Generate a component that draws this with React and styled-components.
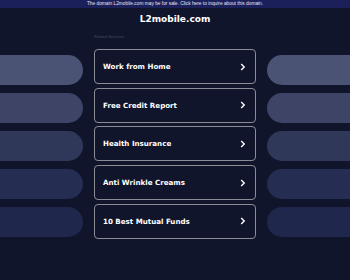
import React from "react";
import styled, { createGlobalStyle } from "styled-components";

const searches = [
  "Work from Home",
  "Free Credit Report",
  "Health Insurance",
  "Anti Wrinkle Creams",
  "10 Best Mutual Funds",
];

const pillColors = ["#4b5374", "#3d4466", "#30385a", "#252d53", "#1f274c"];

const App = () => {
  return (
    <Page>
      <GlobalStyle />
      <TopBar>
        The domain L2mobile.com may be for sale. Click here to inquire about
        this domain.
      </TopBar>
      <Title>L2mobile.com</Title>
      <Layout>
        <PillColumn>
          {pillColors.map((c, idx) => (
            <Pill key={idx} $color={c} $side="left" />
          ))}
        </PillColumn>
        <Center>
          <Label>Related Searches</Label>
          <List>
            {searches.map((s, idx) => (
              <Card key={idx}>
                <span>{s}</span>
                <Chevron viewBox="0 0 6 8">
                  <path d="M1.2 1 L4.2 4 L1.2 7" />
                </Chevron>
              </Card>
            ))}
          </List>
        </Center>
        <PillColumn>
          {pillColors.map((c, idx) => (
            <Pill key={idx} $color={c} $side="right" />
          ))}
        </PillColumn>
      </Layout>
    </Page>
  );
};

const GlobalStyle = createGlobalStyle`
  body {
    margin: 0;
    background: #10152c;
    font-family: "DejaVu Sans", "Liberation Sans", sans-serif;
  }
`;

const Page = styled.div`
  width: 350px;
  height: 280px;
  overflow: hidden;
  background: #10152c;
  display: flex;
  flex-direction: column;
  align-items: stretch;
`;

const TopBar = styled.div`
  height: 8px;
  background: #1b1f5a;
  color: #e6e8f5;
  font-family: "Liberation Sans", Arial, sans-serif;
  font-size: 4.8px;
  line-height: 8px;
  text-align: center;
  white-space: nowrap;
`;

const Title = styled.h1`
  margin: 5px 0 0;
  height: 12px;
  line-height: 12px;
  text-align: center;
  color: #ffffff;
  font-family: "DejaVu Sans", sans-serif;
  font-size: 9px;
  font-weight: 700;
`;

const Layout = styled.div`
  display: grid;
  grid-template-columns: 1fr 162px 1fr;
  column-gap: 11px;
  margin-top: 9px;
`;

const PillColumn = styled.div`
  display: flex;
  flex-direction: column;
  gap: 8px;
  padding-top: 21px;
`;

const Pill = styled.div`
  height: 30px;
  background: ${(p) => p.$color};
  border-radius: ${(p) => (p.$side === "left" ? "0 15px 15px 0" : "15px 0 0 15px")};
`;

const Center = styled.div`
  display: flex;
  flex-direction: column;
`;

const Label = styled.div`
  height: 9px;
  line-height: 6px;
  color: #464c68;
  font-family: "Liberation Sans", Arial, sans-serif;
  font-size: 3.8px;
  margin-bottom: 6px;
`;

const List = styled.div`
  display: flex;
  flex-direction: column;
  gap: 3.7px;
`;

const Card = styled.div`
  box-sizing: border-box;
  height: 35px;
  border: 1.2px solid #8b8d96;
  border-radius: 4px;
  display: flex;
  align-items: center;
  justify-content: space-between;
  padding: 0 9px 0 8px;
  color: #ffffff;
  font-size: 7.1px;
  font-weight: 700;
`;

const Chevron = styled.svg`
  width: 6px;
  height: 8px;
  fill: none;
  stroke: #ffffff;
  stroke-width: 1.4;
`;

export default App;
